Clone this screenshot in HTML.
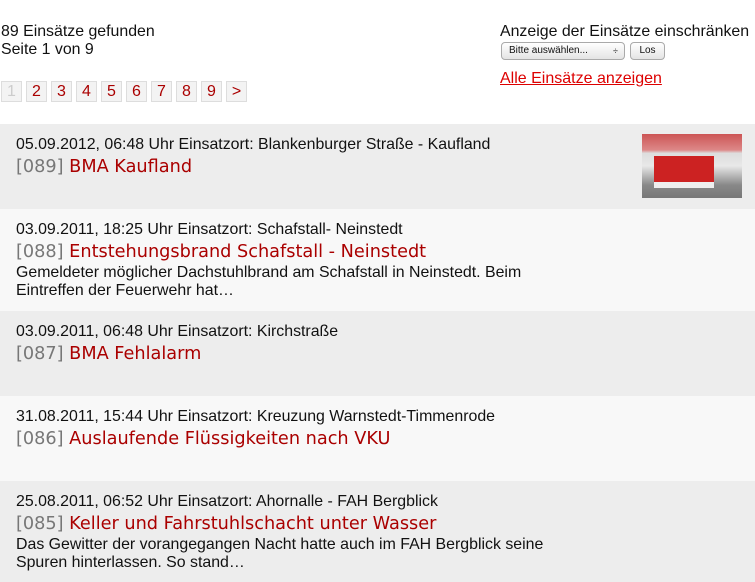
<!DOCTYPE html>
<html><head><meta charset="utf-8"><style>
body{margin:0;width:755px;height:565px;overflow:hidden;background:#fff;font-family:"Liberation Sans",Arial,sans-serif;font-size:15.9px;color:#111;position:relative}
.tl{position:absolute;left:1px;top:23px;line-height:18px}
.tr{position:absolute;left:500px;top:23px;line-height:18px}
.sel{position:absolute;left:501px;top:42px;width:122px;height:16px;border:1px solid #aaa;border-radius:4px;background:linear-gradient(#fff,#e4e4e4);font-size:10px;line-height:16px;box-sizing:content-box}
.sel span{position:absolute;left:7px}
.sel b{position:absolute;right:6px;font-weight:normal;font-size:9px}
.btn{position:absolute;left:630px;top:42px;width:33px;height:16px;border:1px solid #aaa;border-radius:4px;background:linear-gradient(#fff,#e4e4e4);font-size:10px;line-height:16px;text-align:center}
.all{position:absolute;left:500px;top:69px;color:#d00;text-decoration:underline;font-size:16px;line-height:19px}
.pg{position:absolute;top:81px;width:19px;height:19px;border:1px solid #ddd;background:#f3f3f3;color:#a00;font-size:16px;line-height:19px;text-align:center}
.pg.off{color:#ccc}
.rows{position:absolute;top:124px;left:0;width:755px}
.r{box-sizing:border-box;min-height:85px;padding:10px 16px 10px;position:relative}
.r:nth-child(odd){background:#ededed}
.r:nth-child(even){background:#f8f8f8}
.m{line-height:21px}
.t{font-family:"DejaVu Sans",Verdana,sans-serif;font-size:17.7px;color:#a00;line-height:24px;white-space:nowrap}
.t i{font-style:normal;color:#777}
.ds{line-height:18px;width:530px}
.img{position:absolute;left:642px;top:10px;width:100px;height:64px;background:linear-gradient(180deg,#c55 0,#d88 25%,#ddd 30%,#e8e8e8 50%,#888 80%,#777 100%)}
.img:after{content:"";position:absolute;left:12px;top:22px;width:60px;height:26px;background:#c22;border-bottom:6px solid #eee}
</style></head><body>
<div class="tl">89 Einsätze gefunden<br>Seite 1 von 9</div>
<div class="tr">Anzeige der Einsätze einschränken</div>
<div class="sel"><span>Bitte auswählen...</span><b>÷</b></div>
<div class="btn">Los</div>
<div class="all">Alle Einsätze anzeigen</div>
<div class="pg off" style="left:1px">1</div>
<div class="pg" style="left:26px">2</div>
<div class="pg" style="left:51px">3</div>
<div class="pg" style="left:76px">4</div>
<div class="pg" style="left:101px">5</div>
<div class="pg" style="left:126px">6</div>
<div class="pg" style="left:151px">7</div>
<div class="pg" style="left:176px">8</div>
<div class="pg" style="left:201px">9</div>
<div class="pg" style="left:226px">&gt;</div>
<div class="rows">
<div class="r"><div class="m">05.09.2012, 06:48 Uhr Einsatzort: Blankenburger Straße - Kaufland</div><div class="t"><i>[089]</i> BMA Kaufland</div><div class="img"></div></div>
<div class="r" style="height:102px"><div class="m">03.09.2011, 18:25 Uhr Einsatzort: Schafstall- Neinstedt</div><div class="t"><i>[088]</i> Entstehungsbrand Schafstall - Neinstedt</div><div class="ds">Gemeldeter möglicher Dachstuhlbrand am Schafstall in Neinstedt. Beim Eintreffen der Feuerwehr hat…</div></div>
<div class="r" style="height:85px"><div class="m">03.09.2011, 06:48 Uhr Einsatzort: Kirchstraße</div><div class="t"><i>[087]</i> BMA Fehlalarm</div></div>
<div class="r" style="height:85px"><div class="m">31.08.2011, 15:44 Uhr Einsatzort: Kreuzung Warnstedt-Timmenrode</div><div class="t"><i>[086]</i> Auslaufende Flüssigkeiten nach VKU</div></div>
<div class="r"><div class="m">25.08.2011, 06:52 Uhr Einsatzort: Ahornalle - FAH Bergblick</div><div class="t"><i>[085]</i> Keller und Fahrstuhlschacht unter Wasser</div><div class="ds">Das Gewitter der vorangegangen Nacht hatte auch im FAH Bergblick seine Spuren hinterlassen. So stand…</div></div>
</div>
</body></html>
